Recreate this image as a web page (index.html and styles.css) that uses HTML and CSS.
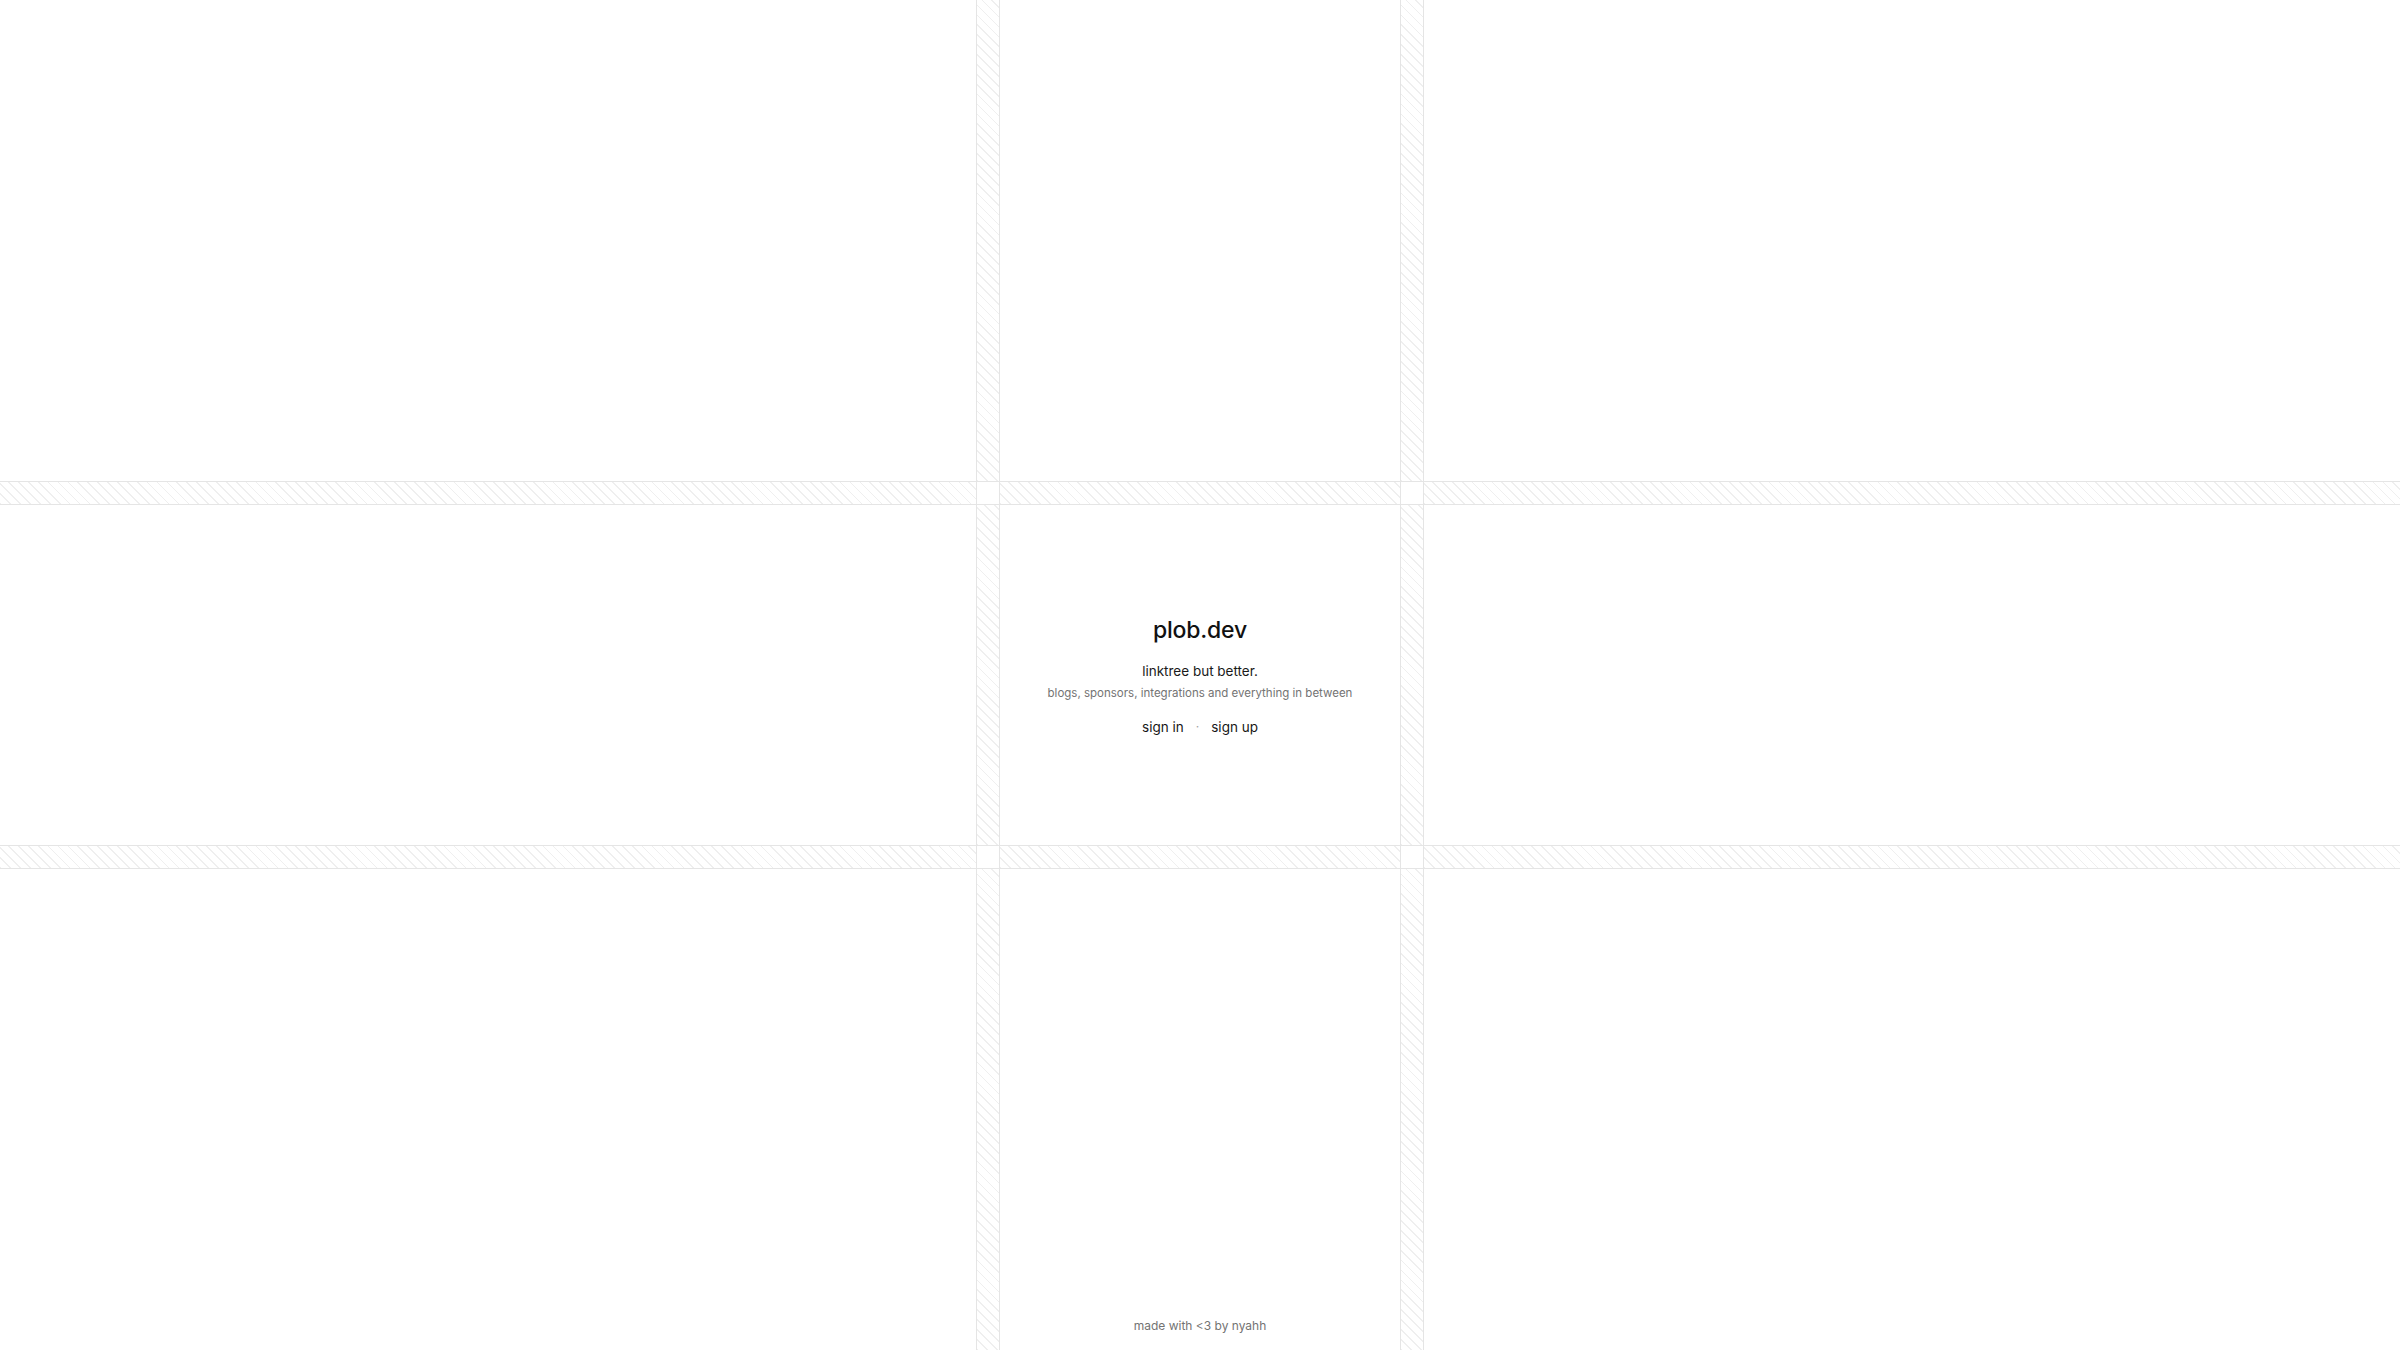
FILE: index.html
```html
<!DOCTYPE html>
<html lang="en">
<head>
<meta charset="utf-8">
<title>plob.dev</title>
<link rel="stylesheet" href="styles.css">
</head>
<body>
<div class="grid">
  <div class="cell"></div>
  <div class="cell vstripe"></div>
  <div class="cell"></div>
  <div class="cell vstripe"></div>
  <div class="cell"></div>

  <div class="cell hstripe"></div>
  <div class="cell cross"></div>
  <div class="cell hstripe"></div>
  <div class="cell cross"></div>
  <div class="cell hstripe"></div>

  <div class="cell"></div>
  <div class="cell vstripe"></div>
  <main class="cell hero">
    <h1 class="title">plob.dev</h1>
    <p class="lead">linktree but better.</p>
    <p class="sub">blogs, sponsors, integrations and everything in between</p>
    <nav class="links">
      <a class="link" href="#">sign in</a>
      <span class="sep">·</span>
      <a class="link" href="#">sign up</a>
    </nav>
  </main>
  <div class="cell vstripe"></div>
  <div class="cell"></div>

  <div class="cell hstripe"></div>
  <div class="cell cross"></div>
  <div class="cell hstripe"></div>
  <div class="cell cross"></div>
  <div class="cell hstripe"></div>

  <div class="cell"></div>
  <div class="cell vstripe"></div>
  <footer class="cell foot">
    <span class="credit">made with &lt;3 by nyahh</span>
  </footer>
  <div class="cell vstripe"></div>
  <div class="cell"></div>
</div>
</body>
</html>
```

FILE: styles.css
```css
* { box-sizing: border-box; }

html, body {
  margin: 0;
  padding: 0;
  height: 100%;
  background: #ffffff;
}

body {
  font-family: Inter, "DejaVu Sans", sans-serif;
  color: #171717;
  overflow: hidden;
}

.grid {
  display: grid;
  grid-template-columns: 1fr 24px 400px 24px 1fr;
  grid-template-rows: 1fr 24px 340px 24px 1fr;
  width: 100vw;
  height: 100vh;
}

.cell {
  min-width: 0;
  min-height: 0;
}

.vstripe,
.hstripe {
  background-image: repeating-linear-gradient(
    45deg,
    #efefef 0,
    #efefef 1.2px,
    transparent 1.2px,
    transparent 7px
  );
}

.vstripe {
  border-left: 1px solid #e5e5e5;
  border-right: 1px solid #e5e5e5;
}

.hstripe {
  border-top: 1px solid #e5e5e5;
  border-bottom: 1px solid #e5e5e5;
}

.cross {
  border: 1px solid #e5e5e5;
  background: #ffffff;
}

.hero {
  display: flex;
  flex-direction: column;
  align-items: center;
  justify-content: center;
  text-align: center;
  padding-top: 5px;
  padding-bottom: 4px;
}

.title {
  margin: 0;
  font-size: 23px;
  font-weight: 500;
  line-height: 28px;
  letter-spacing: -0.2px;
  color: #111111;
}

.lead {
  margin: 18px 0 0;
  font-size: 13.5px;
  line-height: 18px;
  color: #1a1a1a;
}

.sub {
  margin: 5px 0 0;
  font-size: 11.5px;
  line-height: 16px;
  color: #737373;
}

.links {
  display: flex;
  align-items: center;
  gap: 12px;
  margin-top: 17px;
  font-size: 13.5px;
  line-height: 18px;
}

.link {
  color: #171717;
  text-decoration: none;
}

.sep {
  color: #a3a3a3;
  font-size: 12px;
}

.foot {
  display: flex;
  align-items: flex-end;
  justify-content: center;
  padding-bottom: 16px;
}

.credit {
  font-size: 12px;
  line-height: 16px;
  color: #737373;
}
```
